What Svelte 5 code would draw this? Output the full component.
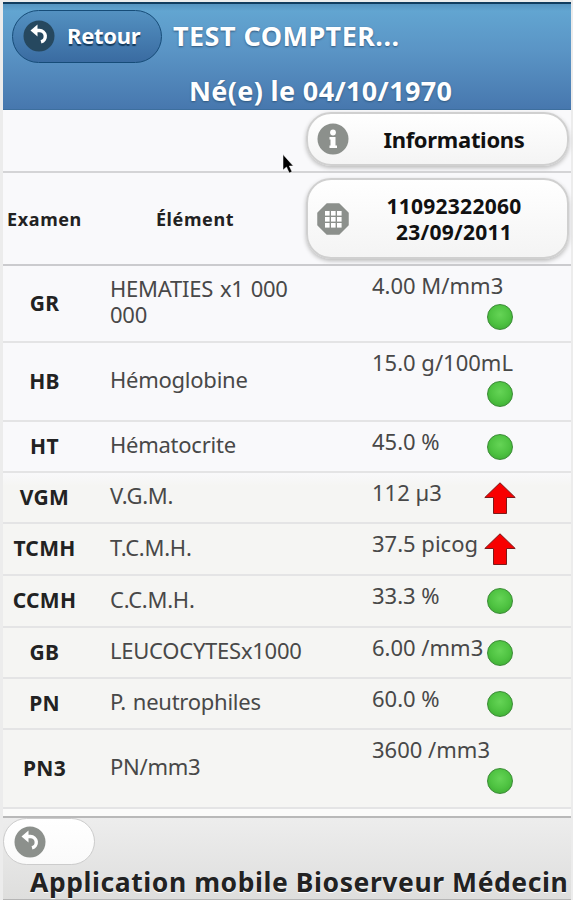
<script lang="ts">
	interface Result {
		code: string;
		label: string;
		value: string;
		status: "ok" | "high";
		height: number;
		stacked?: boolean;
	}

	const results: Result[] = [
		{ code: "GR", label: "HEMATIES x1 000 000", value: "4.00 M/mm3", status: "ok", height: 77, stacked: true },
		{ code: "HB", label: "Hémoglobine", value: "15.0 g/100mL", status: "ok", height: 79, stacked: true },
		{ code: "HT", label: "Hématocrite", value: "45.0 %", status: "ok", height: 51 },
		{ code: "VGM", label: "V.G.M.", value: "112 µ3", status: "high", height: 51 },
		{ code: "TCMH", label: "T.C.M.H.", value: "37.5 picog", status: "high", height: 52 },
		{ code: "CCMH", label: "C.C.M.H.", value: "33.3 %", status: "ok", height: 52 },
		{ code: "GB", label: "LEUCOCYTESx1000", value: "6.00 /mm3", status: "ok", height: 51 },
		{ code: "PN", label: "P. neutrophiles", value: "60.0 %", status: "ok", height: 51 },
		{ code: "PN3", label: "PN/mm3", value: "3600 /mm3", status: "ok", height: 79, stacked: true }
	];
</script>

{#snippet backIcon(color: string)}
	<svg class="icon" viewBox="0 0 32 32" width="32" height="32">
		<circle cx="16" cy="16" r="15.5" fill={color} />
		<path d="M12 10.500h4.500a5.800 5.800 0 0 1 1.500 11.400" fill="none" stroke="#fff" stroke-width="3.400" />
		<path d="M7.500 10.500l7-6v12z" fill="#fff" />
	</svg>
{/snippet}

<div class="page">
	<header class="header">
		<div class="header-top">
			<button class="back">
				{@render backIcon("#26485f")}
				<span>Retour</span>
			</button>
			<h1 class="title">TEST COMPTER...</h1>
		</div>
		<h2 class="birth">Né(e) le 04/10/1970</h2>
	</header>

	<main class="content">
		<div class="row info-row">
			<button class="btn info">
				<svg class="icon" viewBox="0 0 32 32" width="32" height="32">
					<circle cx="16" cy="16" r="15.500" fill="#8c908c" />
					<circle cx="16" cy="9.500" r="2.900" fill="#fff" />
					<path d="M12.500 14h6v8.500h1.500v2.500h-7.500v-2.500h1v-6h-1z" fill="#fff" />
				</svg>
				<span>Informations</span>
			</button>
		</div>

		<div class="row head-row">
			<div class="head exam">Examen</div>
			<div class="head element">Élément</div>
			<button class="btn sample">
				<svg class="icon" viewBox="0 0 32 32" width="32" height="32">
					<path d="M10 1h12l9 9v12l-9 9h-12l-9-9v-12z" fill="#8c908c" stroke="#8c908c" stroke-width="1.500" stroke-linejoin="round" />
					{#each [8, 14, 20] as y}
						{#each [8, 14, 20] as x}
							<rect {x} {y} width="4.600" height="4.600" fill="#fff" />
						{/each}
					{/each}
				</svg>
				<span>11092322060<br />23/09/2011</span>
			</button>
		</div>

		{#each results as r}
			<div class="row result" style="height: {r.height}px">
				<div class="code">{r.code}</div>
				<div class="label">{r.label}</div>
				<div class="value" class:stacked={r.stacked}>
					<span class="text">{r.value}</span>
					{#if r.status === "ok"}
						<span class="dot"></span>
					{:else}
						<svg class="arrow" viewBox="0 0 32 32" width="32" height="32">
							<path d="M16 .8l15.200 14.700h-8.700v16h-13v-16h-8.700z" fill="#f80000" stroke="#7c1a1a" stroke-width="1" />
						</svg>
					{/if}
				</div>
			</div>
		{/each}
	</main>

	<footer class="footer">
		<button class="footer-back" aria-label="Retour">
			{@render backIcon("#8c908c")}
		</button>
		<h2 class="footer-title">Application mobile Bioserveur Médecin</h2>
	</footer>

	<svg class="cursor" viewBox="0 0 12 20" width="12" height="20">
		<path d="M1 .5v15.500l3.500-3 2.700 6 2.800-1.200-2.700-5.800h4z" fill="#000" stroke="#fff" stroke-width=".5" />
	</svg>
</div>

<style>
	:global(body) {
		margin: 0;
		background: #ececec;
	}

	.page {
		position: relative;
		box-sizing: border-box;
		width: 573px;
		height: 900px;
		padding: 2px 2px 0 3px;
		overflow: hidden;
		font-family: "Noto Sans", "Open Sans", sans-serif;
		color: #222;
	}

	h1,
	h2 {
		margin: 0;
		white-space: nowrap;
	}

	button {
		box-sizing: border-box;
		display: flex;
		align-items: center;
		padding: 0;
		font-family: inherit;
		font-weight: 700;
		color: #111;
	}

	.icon {
		flex: none;
	}

	/* Header */
	.header {
		box-sizing: border-box;
		height: 108px;
		border-top: 2px solid #123d5f;
		border-bottom: 1px solid #3d6f9e;
		background: linear-gradient(#5694c0 0, #62a5d1 7px, #5a94c5 45%, #4777ae);
		color: #fff;
		text-shadow: 0 1px 2px #31587d;
	}

	.header-top {
		display: flex;
		align-items: center;
		height: 64px;
	}

	.back {
		width: 150px;
		height: 53px;
		margin-left: 9px;
		padding-left: 10px;
		gap: 12px;
		border: 1.5px solid #164c78;
		border-radius: 27px;
		background: linear-gradient(#5391c1, #3a6ba1);
		color: #fff;
		font-size: 22px;
		letter-spacing: -0.3px;
		text-shadow: 0 2px 1px #143a5c;
	}

	.back span {
		padding-bottom: 2px;
	}

	.title {
		margin-left: 11px;
		font-size: 27px;
		line-height: 36px;
		letter-spacing: 0.45px;
	}

	.birth {
		margin-left: 186px;
		font-size: 27px;
		line-height: 46px;
		letter-spacing: 0.35px;
	}

	/* Rows */
	.content {
		height: 706px;
		background: linear-gradient(#f9f9fb 0, #f9f9fb 362px, #f5f5f3 376px, #f5f5f3 697px, #fbfbfa 699px);
	}

	.row {
		box-sizing: border-box;
		display: grid;
		grid-template-columns: 83px 220px 263px;
		align-items: center;
		border-bottom: 2px solid #e4e4e5;
	}

	.info-row {
		height: 63px;
		border-color: #d4d4d6;
	}

	.head-row {
		height: 93px;
		border-color: #cbcbce;
	}

	.btn {
		grid-column: 3;
		border: 2px solid #d0d0d0;
		border-radius: 25px;
		background: linear-gradient(#fff, #f4f4f4);
		box-shadow: 0 2px 4px #bbb;
	}

	.btn .icon {
		margin-left: 9px;
	}

	.btn span {
		flex: 1;
		padding-left: 14px;
		padding-right: 22px;
	}

	.info {
		height: 54px;
		margin-bottom: 3px;
		font-size: 22px;
		letter-spacing: -0.3px;
	}

	.sample {
		height: 81px;
		font-size: 21px;
		line-height: 26px;
		letter-spacing: 0.25px;
	}

	.head {
		font-size: 18px;
		font-weight: 700;
		letter-spacing: 0.6px;
		text-align: center;
	}

	.element {
		padding-right: 2px;
	}

	.code {
		margin-top: -2px;
		font-size: 21px;
		font-weight: 700;
		letter-spacing: 0.3px;
		text-align: center;
	}

	.label {
		padding-left: 24px;
		margin-top: -5px;
		font-size: 22px;
		line-height: 26px;
		letter-spacing: -0.25px;
		word-spacing: 1.5px;
		color: #484848;
	}

	.value {
		display: grid;
		grid-template-columns: 112px 32px;
		align-self: start;
		padding: 6px 0 0 66px;
		font-size: 22px;
		line-height: 26px;
		color: #484848;
		white-space: nowrap;
	}

	.dot,
	.arrow {
		grid-column: 2;
		justify-self: center;
		margin-top: 6px;
	}

	.dot {
		box-sizing: border-box;
		width: 26px;
		height: 26px;
		border: 1.5px solid #398a34;
		border-radius: 50%;
		background: radial-gradient(circle at 50% 40%, #65d456 0, #4fc342 50%, #37a52e 100%);
	}

	.arrow {
		margin-top: 3px;
	}

	.stacked .text {
		grid-column: 1 / 3;
	}

	/* Footer */
	.footer {
		box-sizing: border-box;
		height: 84px;
		border-top: 2px solid #b9b9b9;
		border-bottom: 1px solid #b5b5b5;
		background: linear-gradient(#ededed, #dededd);
	}

	.footer-back {
		width: 92px;
		height: 47px;
		padding-left: 10px;
		border: 1px solid #ccc;
		border-radius: 24px;
		background: linear-gradient(#fff, #fafafa);
	}

	.footer-title {
		margin-left: 27px;
		font-size: 26.500px;
		line-height: 34px;
		letter-spacing: 0.57px;
		color: #222;
		text-shadow: 0 1px 1px #fff;
	}

	.cursor {
		position: absolute;
		left: 282px;
		top: 154px;
	}
</style>
